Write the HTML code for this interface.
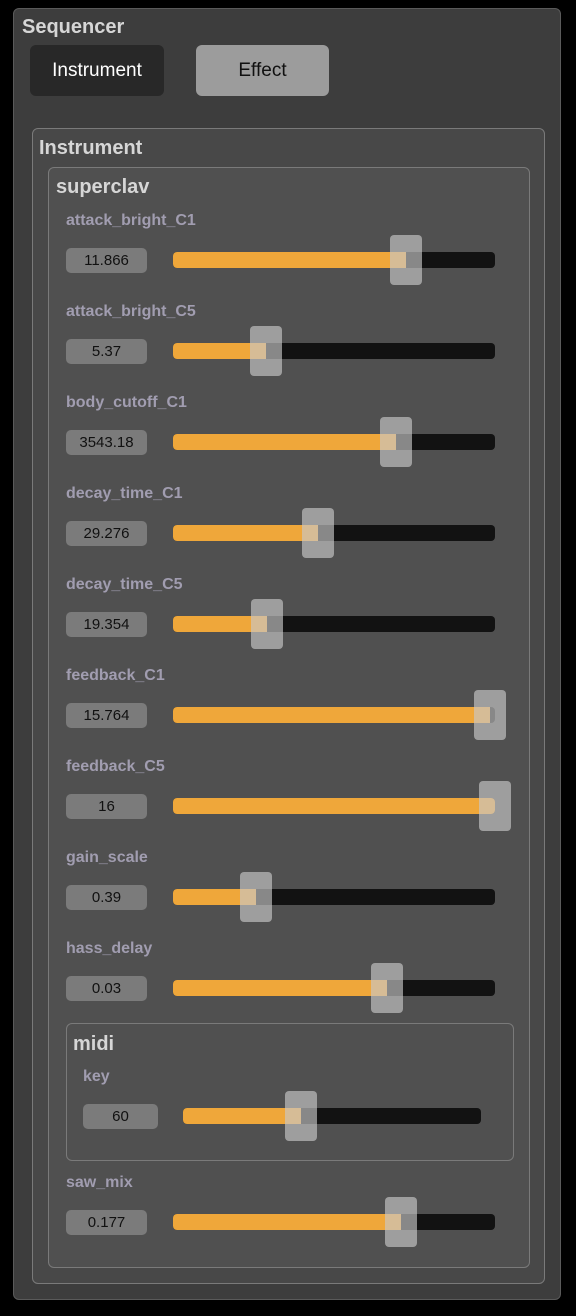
<!DOCTYPE html>
<html><head><meta charset="utf-8"><style>
*{margin:0;padding:0;box-sizing:border-box}
body{width:576px;height:1316px;background:#000;position:relative;overflow:hidden;font-family:"Liberation Sans",sans-serif}
.a{position:absolute}
.panel{position:absolute;border:1px solid #7a7a7a;border-radius:6px}
.t{position:absolute;color:#d6d6d6;font-weight:bold;font-size:20px}
.lab{position:absolute;color:#a19db0;font-weight:bold;font-size:16px}
.val{position:absolute;width:80px;height:25px;background:#7b7b7b;border-radius:5px;color:#111;font-size:15px;text-align:center;line-height:25px}
.trk{position:absolute;height:16px;background:#121212;border-radius:4px;overflow:hidden}
.fill{position:absolute;left:0;top:0;bottom:0;background:#efa73a}
.th{position:absolute;width:32px;height:50px;background:rgba(200,200,200,0.65);border-radius:4px}
</style></head><body>
<div class="panel" style="left:13px;top:8px;width:548px;height:1292px;background:#3d3d3d;border-color:#5a5a5a"></div>
<div class="t" style="left:22px;top:16px">Sequencer</div>
<div class="a" style="left:30px;top:45px;width:134px;height:51px;background:#282828;border-radius:6px;color:#fff;font-size:19px;text-align:center;line-height:52px">Instrument</div>
<div class="a" style="left:196px;top:45px;width:133px;height:51px;background:#9c9c9c;border-radius:6px;color:#111;font-size:19px;text-align:center;line-height:52px">Effect</div>
<div class="panel" style="left:32px;top:128px;width:513px;height:1156px;background:#484848"></div>
<div class="t" style="left:39px;top:137px">Instrument</div>
<div class="panel" style="left:48px;top:167px;width:482px;height:1101px;background:#505050"></div>
<div class="t" style="left:56px;top:176px">superclav</div>
<div class="panel" style="left:66px;top:1023px;width:448px;height:138px;background:#505050"></div>
<div class="t" style="left:73px;top:1033px">midi</div>
<div id="rows"></div>
<script>
var rows=[["attack_bright_C1","11.866",406],["attack_bright_C5","5.37",266],["body_cutoff_C1","3543.18",396],["decay_time_C1","29.276",318],["decay_time_C5","19.354",267],["feedback_C1","15.764",490],["feedback_C5","16",495],["gain_scale","0.39",256],["hass_delay","0.03",387]];
var h="";
function row(lbl,v,c,lx,y,vx,vw,tx,tw){
h+='<div class="lab" style="left:'+lx+'px;top:'+(y-48)+'px">'+lbl+'</div>';
h+='<div class="val" style="left:'+vx+'px;top:'+(y-12)+'px;width:'+vw+'px">'+v+'</div>';
h+='<div class="trk" style="left:'+tx+'px;top:'+(y-8)+'px;width:'+tw+'px"><div class="fill" style="width:'+(c-tx)+'px"></div></div>';
h+='<div class="th" style="left:'+(c-16)+'px;top:'+(y-25)+'px"></div>';
}
rows.forEach(function(r,i){row(r[0],r[1],r[2],66,260+91*i,66,81,173,322);});
row("key","60",301,83,1116,83,75,183,298);
row("saw_mix","0.177",401,66,1222,66,81,173,322);
document.getElementById("rows").innerHTML=h;
</script>
</body></html>
